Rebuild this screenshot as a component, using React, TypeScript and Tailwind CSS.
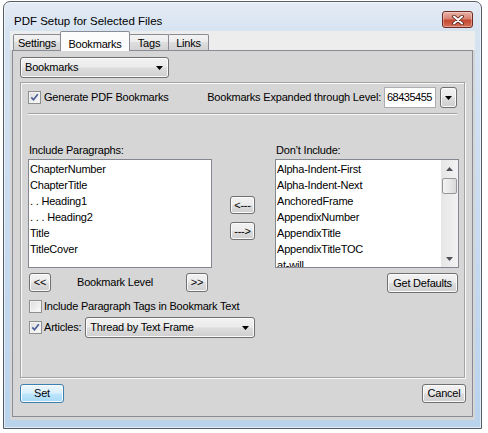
import React from "react";

// Win7-style button face shared by buttons and drop-down lists
const face =
  "border border-[#707070] rounded-[3px] bg-[linear-gradient(#f2f2f2,#ebebeb_48%,#dddddd_52%,#cfcfcf)] shadow-[inset_0_0_0_1px_#fbfbfb] text-black leading-none";

function Button({ label, className = "" }: { label: string; className?: string }) {
  return (
    <button type="button" className={`${face} flex shrink-0 items-center justify-center ${className}`}>
      {label}
    </button>
  );
}

function Arrow() {
  return (
    <svg width="7" height="4" viewBox="0 0 7 4" className="shrink-0">
      <path d="M0 0h7L3.5 4z" fill="#000" />
    </svg>
  );
}

function Combo({ value, className = "" }: { value: string; className?: string }) {
  return (
    <div className={`${face} flex shrink-0 items-center justify-between pl-[4px] pr-[5px] ${className}`}>
      <span>{value}</span>
      <Arrow />
    </div>
  );
}

function CheckBox({ checked }: { checked?: boolean }) {
  return (
    <span className="flex h-[13px] w-[13px] shrink-0 items-center justify-center border border-[#8e8f8f] bg-[linear-gradient(135deg,#dcdcdc,#fdfdfd)] shadow-[inset_0_0_0_1px_#f3f3f3]">
      {checked && (
        <svg width="9" height="9" viewBox="0 0 9 9">
          <path d="M1.3 4.4 L3.5 6.8 L7.8 1.2" fill="none" stroke="#4a5f97" strokeWidth="1.7" />
        </svg>
      )}
    </span>
  );
}

function Tab({ label, selected, className = "" }: { label: string; selected?: boolean; className?: string }) {
  if (selected) {
    return (
      <div
        className={`relative z-10 -mb-px flex h-[20px] shrink-0 items-start justify-center rounded-t-[2px] border border-b-0 border-[#898c95] bg-[#fcfcfc] pt-[4px] ${className}`}
      >
        {label}
      </div>
    );
  }
  return (
    <div
      className={`flex h-[16px] shrink-0 items-center justify-center rounded-t-[2px] border border-b-0 border-[#898c95] bg-[linear-gradient(#f3f3f3,#ebebeb_50%,#dedede_50%,#d2d2d2)] pt-[1px] ${className}`}
    >
      {label}
    </div>
  );
}

const included = ["ChapterNumber", "ChapterTitle", ". . Heading1", ". . . Heading2", "Title", "TitleCover"];
const excluded = [
  "Alpha-Indent-First",
  "Alpha-Indent-Next",
  "AnchoredFrame",
  "AppendixNumber",
  "AppendixTitle",
  "AppendixTitleTOC",
  "at-will",
];

function ListBox({ items, scroll }: { items: string[]; scroll?: boolean }) {
  return (
    <div className="flex h-[109px] w-[184px] overflow-hidden border border-[#828790] bg-white">
      <div className="flex-1 overflow-hidden pl-[1px] pt-[1px]">
        {items.map((it) => (
          <div key={it} className="h-[16px] whitespace-nowrap leading-[16px]">
            {it}
          </div>
        ))}
      </div>
      {scroll && (
        <div className="flex w-[17px] shrink-0 flex-col items-center bg-[linear-gradient(90deg,#e6e6e6,#f2f2f2)]">
          <div className="flex h-[17px] items-center justify-center">
            <svg width="7" height="4" viewBox="0 0 7 4">
              <path d="M0 4h7L3.5 0z" fill="#4e5056" />
            </svg>
          </div>
          <div className="mt-[1px] h-[16px] w-[15px] rounded-[2px] border border-[#979797] bg-[linear-gradient(90deg,#f3f3f3,#e8e8e8_50%,#d9d9d9)]" />
          <div className="flex-1" />
          <div className="flex h-[17px] items-center justify-center">
            <svg width="7" height="4" viewBox="0 0 7 4">
              <path d="M0 0h7L3.5 4z" fill="#4e5056" />
            </svg>
          </div>
        </div>
      )}
    </div>
  );
}

export default function App() {
  return (
    <div className="h-[433px] w-[488px] overflow-hidden bg-white pt-[1px] font-['Liberation_Sans',Arial,sans-serif] text-[11px] tracking-[-0.2px] text-black">
      {/* window frame */}
      <div className="ml-[3px] flex h-[428px] w-[479px] flex-col rounded-t-[7px] border border-[#555c66] bg-[linear-gradient(#e4ecf6,#d6e3f1_30px,#c9dbef_220px,#b9d3ed)] shadow-[inset_0_0_0_1px_rgba(255,255,255,0.55)]">
        {/* title bar */}
        <div className="flex h-[29px] shrink-0 items-start justify-between">
          <span className="ml-[10px] mt-[12px] text-[11.5px] leading-[14px] tracking-normal">PDF Setup for Selected Files</span>
          <div className="mr-[8px] mt-[9px] flex h-[17px] w-[31px] items-center justify-center rounded-[3px] border border-[#6e2b22] bg-[linear-gradient(#eab1a5,#d98474_45%,#c5472f_55%,#d66f58)] shadow-[inset_0_0_0_1px_rgba(255,255,255,0.35)]">
            <svg width="12" height="10" viewBox="0 0 12 10">
              <path d="M2 1.5 L10 8.5 M10 1.5 L2 8.5" stroke="#4a1e18" strokeWidth="3.6" strokeLinecap="round" />
              <path d="M2 1.5 L10 8.5 M10 1.5 L2 8.5" stroke="#ffffff" strokeWidth="2" strokeLinecap="round" />
            </svg>
          </div>
        </div>

        {/* client area */}
        <div className="ml-[6px] flex h-[389px] w-[465px] flex-col bg-[#d6d6d6]">
          {/* tab strip */}
          <div className="flex h-[19px] shrink-0 items-end bg-[#ededed] pl-[3px]">
            <Tab label="Settings" className="w-[48px]" />
            <Tab label="Bookmarks" selected className="-ml-px w-[70px]" />
            <Tab label="Tags" className="-ml-px w-[40px]" />
            <Tab label="Links" className="-ml-px w-[41px]" />
          </div>

          {/* tab page */}
          <div className="ml-[2px] flex h-[367px] w-[461px] flex-col border border-[#898c95] bg-[#d6d6d6] pl-[7px] pt-[6px]">
            <Combo value="Bookmarks" className="h-[21px] w-[149px]" />

            {/* group box */}
            <div className="mt-[4px] flex h-[296px] w-[445px] flex-col border border-[#a3a3a3] pl-[7px] pr-[5px] pt-[4px] shadow-[1px_1px_0_#f8f8f8,inset_1px_1px_0_#f8f8f8]">
              <div className="mr-[2px] flex h-[21px] items-center justify-between">
                <label className="flex items-center gap-[3px]">
                  <CheckBox checked />
                  <span>Generate PDF Bookmarks</span>
                </label>
                <div className="flex items-center">
                  <span>Bookmarks Expanded through Level:</span>
                  <div className="ml-[3px] flex h-[21px] w-[52px] items-center overflow-hidden whitespace-nowrap border border-[#abadb3] bg-white pl-[2px] tracking-[-0.5px]">
                    68435455
                  </div>
                  <div className={`${face} ml-[4px] flex h-[21px] w-[17px] items-center justify-center`}>
                    <Arrow />
                  </div>
                </div>
              </div>

              <div className="mr-[2px] mt-[5px] h-[2px] border-b border-t border-b-[#f8f8f8] border-t-[#a3a3a3]" />

              {/* paragraph lists */}
              <div className="mt-[29px] flex">
                <div className="flex w-[184px] flex-col">
                  <span className="h-[13px] pl-[1px] leading-[13px]">Include Paragraphs:</span>
                  <div className="mt-[2px]">
                    <ListBox items={included} />
                  </div>
                  <div className="mt-[5px] flex h-[19px] items-center pl-[1px]">
                    <Button label="<<" className="h-[19px] w-[22px]" />
                    <span className="ml-[26px]">Bookmark Level</span>
                    <Button label=">>" className="ml-auto mr-[4px] h-[19px] w-[22px]" />
                  </div>
                </div>

                <div className="ml-[18px] flex w-[25px] flex-col pt-[52px]">
                  <Button label="<---" className="h-[18px] w-[25px]" />
                  <Button label="--->" className="mt-[8px] h-[18px] w-[25px]" />
                </div>

                <div className="ml-[20px] flex w-[184px] flex-col">
                  <span className="h-[13px] pl-[1px] leading-[13px]">Don’t Include:</span>
                  <div className="mt-[2px]">
                    <ListBox items={excluded} scroll />
                  </div>
                  <div className="mt-[5px] flex justify-end pr-[1px]">
                    <Button label="Get Defaults" className="h-[20px] w-[71px]" />
                  </div>
                </div>
              </div>

              <label className="mt-[6px] flex h-[14px] items-center gap-[2px] pl-[1px]">
                <CheckBox />
                <span>Include Paragraph Tags in Bookmark Text</span>
              </label>

              <div className="mt-[4px] flex h-[21px] items-center pl-[1px]">
                <CheckBox checked />
                <span className="ml-[2px]">Articles:</span>
                <Combo value="Thread by Text Frame" className="ml-[4px] h-[21px] w-[170px]" />
              </div>
            </div>

            {/* dialog buttons */}
            <div className="mt-[6px] flex w-[446px] justify-between">
              <Button
                label="Set"
                className="h-[19px] w-[44px] !border-[#3c7fb1] !bg-[linear-gradient(#eaf6fd,#d9f0fc_48%,#bee6fd_52%,#a7d9f5)]"
              />
              <Button label="Cancel" className="h-[19px] w-[44px]" />
            </div>
          </div>
        </div>
      </div>
    </div>
  );
}
